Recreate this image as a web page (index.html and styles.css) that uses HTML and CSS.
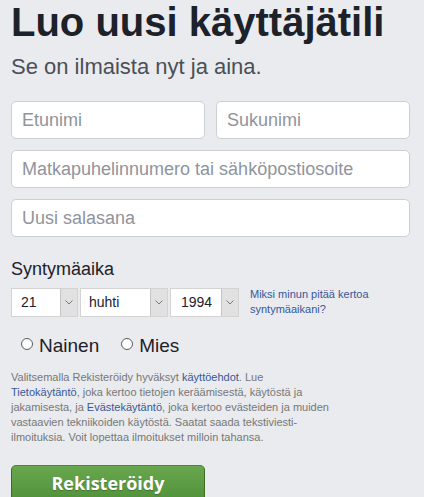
FILE: index.html
```html
<!DOCTYPE html>
<html lang="fi">
<head>
<meta charset="utf-8">
<title>Luo uusi käyttäjätili</title>
<link rel="stylesheet" href="styles.css">
</head>
<body>
<div class="page">
  <h1 class="title">Luo uusi käyttäjätili</h1>
  <p class="subtitle">Se on ilmaista nyt ja aina.</p>

  <form class="form">
    <div class="name-row">
      <input class="field" type="text" placeholder="Etunimi">
      <input class="field" type="text" placeholder="Sukunimi">
    </div>
    <input class="field" type="text" placeholder="Matkapuhelinnumero tai sähköpostiosoite">
    <input class="field" type="password" placeholder="Uusi salasana">

    <div class="birthday">
      <div class="label">Syntymäaika</div>
      <div class="bday-row">
        <div class="sel sel-day">
          <select><option>21</option></select>
          <span class="arrow"><svg width="8" height="5" viewBox="0 0 8 5"><path d="M0.5 0.5 L4 4 L7.5 0.5" fill="none" stroke="#7a7a7a" stroke-width="1"/></svg></span>
        </div>
        <div class="sel sel-month">
          <select><option>huhti</option></select>
          <span class="arrow"><svg width="8" height="5" viewBox="0 0 8 5"><path d="M0.5 0.5 L4 4 L7.5 0.5" fill="none" stroke="#7a7a7a" stroke-width="1"/></svg></span>
        </div>
        <div class="sel sel-year">
          <select><option>1994</option></select>
          <span class="arrow"><svg width="8" height="5" viewBox="0 0 8 5"><path d="M0.5 0.5 L4 4 L7.5 0.5" fill="none" stroke="#7a7a7a" stroke-width="1"/></svg></span>
        </div>
        <a class="why" href="#">Miksi minun pitää kertoa syntymäaikani?</a>
      </div>
    </div>

    <div class="gender">
      <label class="radio"><input type="radio" name="sex"><span>Nainen</span></label>
      <label class="radio"><input type="radio" name="sex"><span>Mies</span></label>
    </div>

    <p class="terms">Valitsemalla Rekisteröidy hyväksyt <a href="#">käyttöehdot</a>. Lue <a href="#">Tietokäytäntö</a>, joka kertoo tietojen keräämisestä, käytöstä ja jakamisesta, ja <a href="#">Evästekäytäntö</a>, joka kertoo evästeiden ja muiden vastaavien tekniikoiden käytöstä. Saatat saada tekstiviesti-ilmoituksia. Voit lopettaa ilmoitukset milloin tahansa.</p>

    <button class="submit" type="button">Rekisteröidy</button>
  </form>
</div>
</body>
</html>
```

FILE: styles.css
```css
html, body {
  margin: 0;
  padding: 0;
  background: #e9ebee;
}

body {
  font-family: "Liberation Sans", Arial, sans-serif;
  color: #1d2129;
}

.page {
  padding: 0 14px 0 11px;
}

.title {
  margin: 0;
  font-size: 40px;
  line-height: 44px;
  font-weight: bold;
  color: #1d2129;
}

.subtitle {
  margin: 10px 0 0;
  font-size: 22px;
  line-height: 26px;
  color: #4b4f56;
}

.form {
  margin-top: 21px;
  display: flex;
  flex-direction: column;
  gap: 11px;
}

.name-row {
  display: grid;
  grid-template-columns: 1fr 1fr;
  gap: 11px;
}

.field {
  box-sizing: border-box;
  width: 100%;
  height: 38px;
  margin: 0;
  padding: 0 10px;
  border: 1px solid #ccd0d5;
  border-radius: 5px;
  background: #fff;
  font-family: "Liberation Sans", Arial, sans-serif;
  font-size: 18px;
  color: #1d2129;
}

.field::placeholder {
  color: #90949c;
}

.birthday {
  margin-top: 10px;
}

.label {
  font-size: 18px;
  line-height: 22px;
  color: #1d2129;
}

.bday-row {
  margin-top: 7px;
  display: flex;
  align-items: center;
  gap: 2px;
}

.sel {
  box-sizing: border-box;
  height: 29px;
  display: flex;
  border: 1px solid #d3d3d3;
  background: #fff;
}

.sel-day { width: 67px; }
.sel-month { width: 88px; }
.sel-year { width: 69px; }

.sel select {
  flex: 1;
  min-width: 0;
  appearance: none;
  -webkit-appearance: none;
  border: none;
  background: #fff;
  margin: 0;
  padding: 0 0 0 9px;
  font-family: "Liberation Sans", Arial, sans-serif;
  font-size: 14px;
  color: #1d2129;
  outline: none;
}

.sel-month select { padding-left: 8px; }
.sel-year select { padding-left: 10px; }

.arrow {
  width: 16px;
  display: flex;
  align-items: center;
  justify-content: center;
  background: #e1e1e1;
  border-left: 1px solid #c4c4c4;
}

.why {
  margin-left: 9px;
  font-size: 11px;
  line-height: 15px;
  color: #365899;
  text-decoration: none;
  width: 140px;
}

.gender {
  margin-top: 7px;
  display: flex;
  gap: 22px;
  padding-left: 10px;
}

.radio {
  display: flex;
  align-items: flex-start;
  font-size: 19px;
  line-height: 22px;
  color: #1d2129;
}

.radio input {
  appearance: none;
  -webkit-appearance: none;
  box-sizing: border-box;
  width: 12px;
  height: 12px;
  margin: 3px 6px 0 0;
  border: 1px solid #5b5b5b;
  border-radius: 50%;
  background: #fff;
}

.terms {
  margin: 2px 0 0;
  width: 318px;
  font-size: 11px;
  line-height: 15px;
  color: #777;
}

.terms a {
  color: #365899;
  text-decoration: none;
}

.submit {
  margin-top: 9px;
  box-sizing: border-box;
  width: 194px;
  height: 40px;
  padding: 0 0 4px;
  border: 1px solid;
  border-color: #4a8a34 #3b6e22 #2c5115;
  border-radius: 5px;
  background: linear-gradient(#69a74e, #4e8f38);
  color: #fff;
  font-family: "Open Sans", "Liberation Sans", sans-serif;
  font-weight: bold;
  font-size: 18px;
  text-shadow: 0 1px 1px rgba(0, 0, 0, 0.25);
  align-self: flex-start;
}
```
